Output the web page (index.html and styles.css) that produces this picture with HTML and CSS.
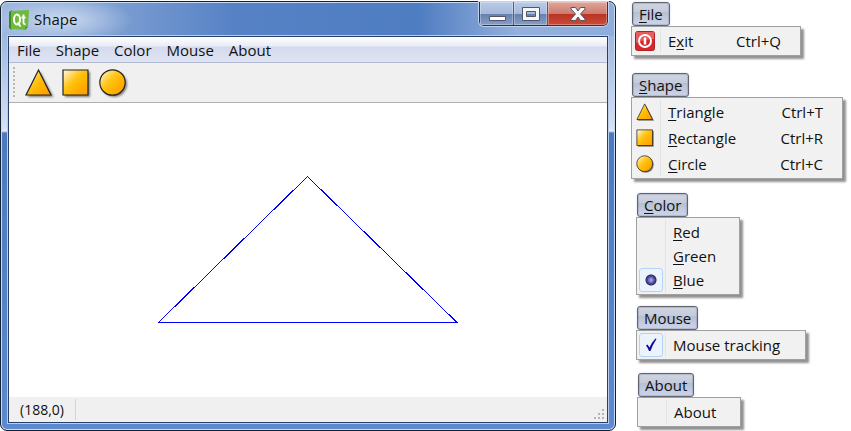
FILE: index.html
```
<!DOCTYPE html>
<html lang="en">
<head>
<meta charset="utf-8">
<title>Shape</title>
<link rel="stylesheet" href="styles.css">
</head>
<body>
<svg class="defs" aria-hidden="true">
  <defs>
    <linearGradient id="gold" x1="0" y1="0" x2="1" y2="1">
      <stop offset="0" stop-color="#fffbe8"/><stop offset=".4" stop-color="#ffc61c"/><stop offset=".6" stop-color="#ffb600"/><stop offset="1" stop-color="#ff9800"/>
    </linearGradient>
    <filter id="soft" x="-20%" y="-20%" width="140%" height="140%"><feGaussianBlur stdDeviation=".8"/></filter>
    <symbol id="tri" viewBox="0 0 32 32">
      <path d="M17.500 5 30.500 30H4.500z" fill="#555" opacity=".75" filter="url(#soft)"/>
      <path d="M15.500 3 28 28H3z" fill="url(#gold)" stroke="#222" stroke-width="1.200"/>
    </symbol>
    <symbol id="rect" viewBox="0 0 32 32">
      <path d="M5 5h25v25H5z" fill="#555" opacity=".75" filter="url(#soft)"/>
      <path d="M3 3h25v25H3z" fill="url(#gold)" stroke="#222" stroke-width="1.200"/>
    </symbol>
    <symbol id="circ" viewBox="0 0 32 32">
      <circle cx="17.300" cy="17.300" r="12.700" fill="#555" opacity=".75" filter="url(#soft)"/>
      <circle cx="15.500" cy="15.500" r="12.700" fill="url(#gold)" stroke="#222" stroke-width="1.200"/>
    </symbol>
  </defs>
</svg>
<main class="page">
  <section class="window">
    <header class="titlebar">
      <svg class="logo" viewBox="0 0 20 20" aria-hidden="true">
        <path d="M0 2 3 0v20l-3-2z" fill="#3a8a20"/>
        <path d="M2 1 20 0l-1 17-3 3L2 19z" fill="#6fb93c"/>
        <path d="M16 20v-3h3z" fill="#4f942b"/>
        <ellipse cx="8" cy="9.500" rx="3" ry="5" fill="none" stroke="#fff" stroke-width="2"/>
        <path d="M8.500 12.500l3 4M14.500 4.500v8q0 2 2 1.500M12.500 7.500h4" fill="none" stroke="#fff" stroke-width="1.800"/>
      </svg>
      <h1>Shape</h1>
      <div class="controls">
        <button type="button" aria-label="Minimize"><svg viewBox="0 0 18 16"><path d="M1.500 10.500h16v4h-16z" fill="#fff" stroke="#53566b"/></svg></button>
        <button type="button" aria-label="Maximize"><svg viewBox="0 0 18 16"><path d="M.5 1.500h17v13H.5zm4 4v5h9v-5z" fill="#f6f6f6" fill-rule="evenodd" stroke="#53566b"/></svg></button>
        <button type="button" class="close" aria-label="Close"><svg viewBox="0 0 18 16"><path d="M2 1.500h4.500L9 5l2.500-3.500H16v1.500L11.500 8l4.500 5v1.500h-4.500L9 11l-2.500 3.500H2V13l4.500-5L2 3z" fill="#f8f8f8" stroke="#53566b"/></svg></button>
      </div>
    </header>
    <div class="client">
      <nav class="menubar">
        <button type="button">File</button><button type="button">Shape</button><button type="button">Color</button><button type="button">Mouse</button><button type="button">About</button>
      </nav>
      <div class="toolbar">
        <span class="grip"></span>
        <button type="button" aria-label="Triangle"><svg><use href="#tri"/></svg></button>
        <button type="button" aria-label="Rectangle"><svg><use href="#rect"/></svg></button>
        <button type="button" aria-label="Circle"><svg><use href="#circ"/></svg></button>
      </div>
      <div class="canvas">
        <svg viewBox="0 0 300 148" shape-rendering="crispEdges"><path d="M149.500 1.500 299 147.500H.5z" fill="none" stroke="#00f"/></svg>
      </div>
      <footer class="status">
        <span class="coords">(188,0)</span>
        <svg class="sizer" viewBox="0 0 11 11" aria-hidden="true"><path d="M8 0h2v2H8zM4 4h2v2H4zM8 4h2v2H8zM0 8h2v2H0zM4 8h2v2H4zM8 8h2v2H8z" fill="#b4b4b4"/></svg>
      </footer>
    </div>
  </section>
  <aside class="menus">
    <section class="group file">
      <button type="button" class="tab"><u>F</u>ile</button>
      <div class="menu tall">
        <button type="button" class="item"><span class="mark"><svg viewBox="0 0 20 20"><rect x=".5" y=".5" width="19" height="19" rx="2" fill="#d6282c" stroke="#b32025"/><path d="M1 1h18v7Q10 8 1 12z" fill="#f08080" opacity=".6"/><circle cx="10" cy="10" r="6" fill="none" stroke="#fff" stroke-width="2"/><path d="M10 6.500v7" stroke="#fff" stroke-width="2.500"/></svg></span><span>E<u>x</u>it</span><kbd>Ctrl+Q</kbd></button>
      </div>
    </section>
    <section class="group shape">
      <button type="button" class="tab"><u>S</u>hape</button>
      <div class="menu tall">
        <button type="button" class="item"><span class="mark"><svg><use href="#tri"/></svg></span><span><u>T</u>riangle</span><kbd>Ctrl+T</kbd></button>
        <button type="button" class="item"><span class="mark"><svg><use href="#rect"/></svg></span><span><u>R</u>ectangle</span><kbd>Ctrl+R</kbd></button>
        <button type="button" class="item"><span class="mark"><svg><use href="#circ"/></svg></span><span><u>C</u>ircle</span><kbd>Ctrl+C</kbd></button>
      </div>
    </section>
    <section class="group color">
      <button type="button" class="tab"><u>C</u>olor</button>
      <div class="menu">
        <label class="item"><input type="radio" name="color"><span><u>R</u>ed</span></label>
        <label class="item"><input type="radio" name="color"><span><u>G</u>reen</span></label>
        <label class="item"><input type="radio" name="color" checked><span><u>B</u>lue</span></label>
      </div>
    </section>
    <section class="group mouse">
      <button type="button" class="tab">Mouse</button>
      <div class="menu">
        <label class="item"><input type="checkbox" checked><svg class="tick" viewBox="0 0 12 14" aria-hidden="true"><path d="M1 7.500 2.500 6.500 4.500 9.500Q7 4 10.500.5L11.500 1Q8 6 5.500 13H4Q3 10 1 7.500z" fill="#0c0c9c"/></svg><span>Mouse tracking</span></label>
      </div>
    </section>
    <section class="group about">
      <button type="button" class="tab">About</button>
      <div class="menu">
        <button type="button" class="item"><span class="mark"></span><span>About</span></button>
      </div>
    </section>
  </aside>
</main>
</body>
</html>
```
FILE: styles.css
```
* { box-sizing: border-box; }
body { margin: 0; background: #fff; color: #111; font: 15px/20px "Open Sans", "Noto Sans", sans-serif; }
button { font: inherit; color: inherit; margin: 0; padding: 0; border: 0; background: none; }
svg { display: block; }
.defs { position: absolute; width: 0; height: 0; }
.page { display: flex; min-height: 100vh; padding-top: 1px; }

.window {
  flex: 1; display: flex; flex-direction: column;
  padding: 0 7px 7px; border: 1px solid #14202e; border-radius: 7px;
  box-shadow: inset 0 0 0 1px #c9dcf4;
  background:
    radial-gradient(ellipse 70px 24px at 62px 18px, rgba(225,234,247,.75), transparent) no-repeat,
    linear-gradient(90deg, #9fb8de, #5682c5 38%, #4f7dc2 68%, #94b0db 84%, #8faddb) 0 0 / 100% 34px no-repeat,
    linear-gradient(#9fb8de 34px, #d5e1f3 126px, #e6eef9 129px, #4c7abf 131px, #5d8acf);
}
.titlebar { display: flex; align-items: flex-start; height: 34px; padding-left: 1px; }
.logo { width: 20px; height: 20px; margin-top: 8px; }
.titlebar h1 { margin: 7px 0 0 5px; font: inherit; }
.controls {
  display: flex; margin-left: auto; border: 1px solid #25344f; border-top: 0;
  border-radius: 0 0 5px 5px; box-shadow: 0 0 0 1px #c0d3ee; overflow: clip; overflow-clip-margin: 1px;
}
.controls button {
  display: grid; place-items: center; width: 34px; height: 23px; border-right: 1px solid #4a5f85;
  background: linear-gradient(#b8cae6, #a5b9da 50%, #6580ad 52%, #879fc9);
  box-shadow: inset 0 0 0 1px rgba(255,255,255,.3);
}
.controls svg { width: 18px; height: 16px; }
.controls .close {
  width: 59px; border: 0; border-radius: 0 0 4px 0;
  background: linear-gradient(#dfa69d, #cf7a6e 50%, #b93323 52%, #cb4b38);
}
.client {
  flex: 1; display: flex; flex-direction: column; border: 1px solid #263f6b;
  box-shadow: 0 0 0 1px #b9cdec; background: #fff;
}
.menubar {
  display: flex; gap: 1px; height: 26px; padding-left: 1px; border-bottom: 1px solid #b4b9d2;
  background: linear-gradient(#fff, #e8ecf6 9px, #d4daed 10px, #e0e5f4);
}
.menubar button { padding: 0 7px; }
.toolbar { display: flex; align-items: center; height: 40px; padding-left: 4px; border-bottom: 1px solid #b0b0b0; background: #f0f0f0; }
.grip { width: 2px; height: 31px; margin-right: 8px; background: repeating-linear-gradient(#b8b8b8 0 2px, transparent 2px 4px); }
.toolbar button { width: 37px; height: 32px; }
.toolbar svg { width: 32px; height: 32px; }
.canvas { flex: 1; display: flex; justify-content: center; align-items: flex-start; padding-top: 72px; }
.canvas svg { width: 300px; max-width: 100%; height: auto; }
.status { display: flex; align-items: center; justify-content: space-between; height: 25px; background: #f0f0f0; }
.coords { padding: 1px 11px 0; border-right: 1px solid #d5d5d5; font-size: 14px; }
.sizer { width: 11px; height: 11px; align-self: flex-end; margin: 0 2px 2px 0; }

.menus { flex: 0 0 235px; padding: 1px 0 0 15px; }
.group { display: flex; flex-direction: column; align-items: flex-start; }
.tab {
  height: 24px; margin-left: 1px; padding: 0 6px; border: 1px solid #60646e; border-radius: 3px;
  background: linear-gradient(#d0d5e1, #c5cbdb 40%, #b7bfd3 42%, #ced6eb);
  box-shadow: inset 0 0 1px 1px rgba(90,100,125,.25), 0 0 2px #cdd5ea;
}
.menu {
  padding: 2px; border: 1px solid #a0a0a0;
  background: linear-gradient(#e2e3e3, #e2e3e3) 28px 2px / 1px calc(100% - 4px) no-repeat, #f1f1f1;
  box-shadow: 3px 3px 2px #929292;
}
.item { display: flex; align-items: center; position: relative; width: 100%; height: 24px; padding-right: 18px; text-align: left; }
.mark { display: grid; place-items: center; flex: 0 0 24px; margin-right: 10px; }
.mark svg { width: 20px; height: 20px; }
.item kbd { margin-left: auto; font: inherit; }
.tall { padding: 1px; }
.tall .item { height: 26px; }
.tall .mark { margin-right: 11px; }
.item input { appearance: none; flex: 0 0 24px; height: 24px; margin: 0 10px 0 0; border-radius: 3px; }
.item input:checked { border: 1px solid #b3d3f9; background: #edf3fa; }
.item input[type="radio"]:checked { background: radial-gradient(circle at 50% 50%, #b8b8e8 0, #5c5cae 3px, #29296c 5px, transparent 6px), #edf3fa; }
.tick { position: absolute; left: 6px; top: 5px; width: 12px; height: 14px; }
u { text-decoration-thickness: 1px; text-underline-offset: 2px; }

.file .menu { width: 170px; }
.shape { margin-top: 17px; }
.shape .menu { width: 212px; }
.color { margin: 14px 0 0 5px; }
.color .menu { width: 104px; }
.mouse { margin: 11px 0 0 5px; }
.mouse .menu { width: 170px; }
.about { margin: 13px 0 0 6px; }
.about .menu { width: 104px; }
```
